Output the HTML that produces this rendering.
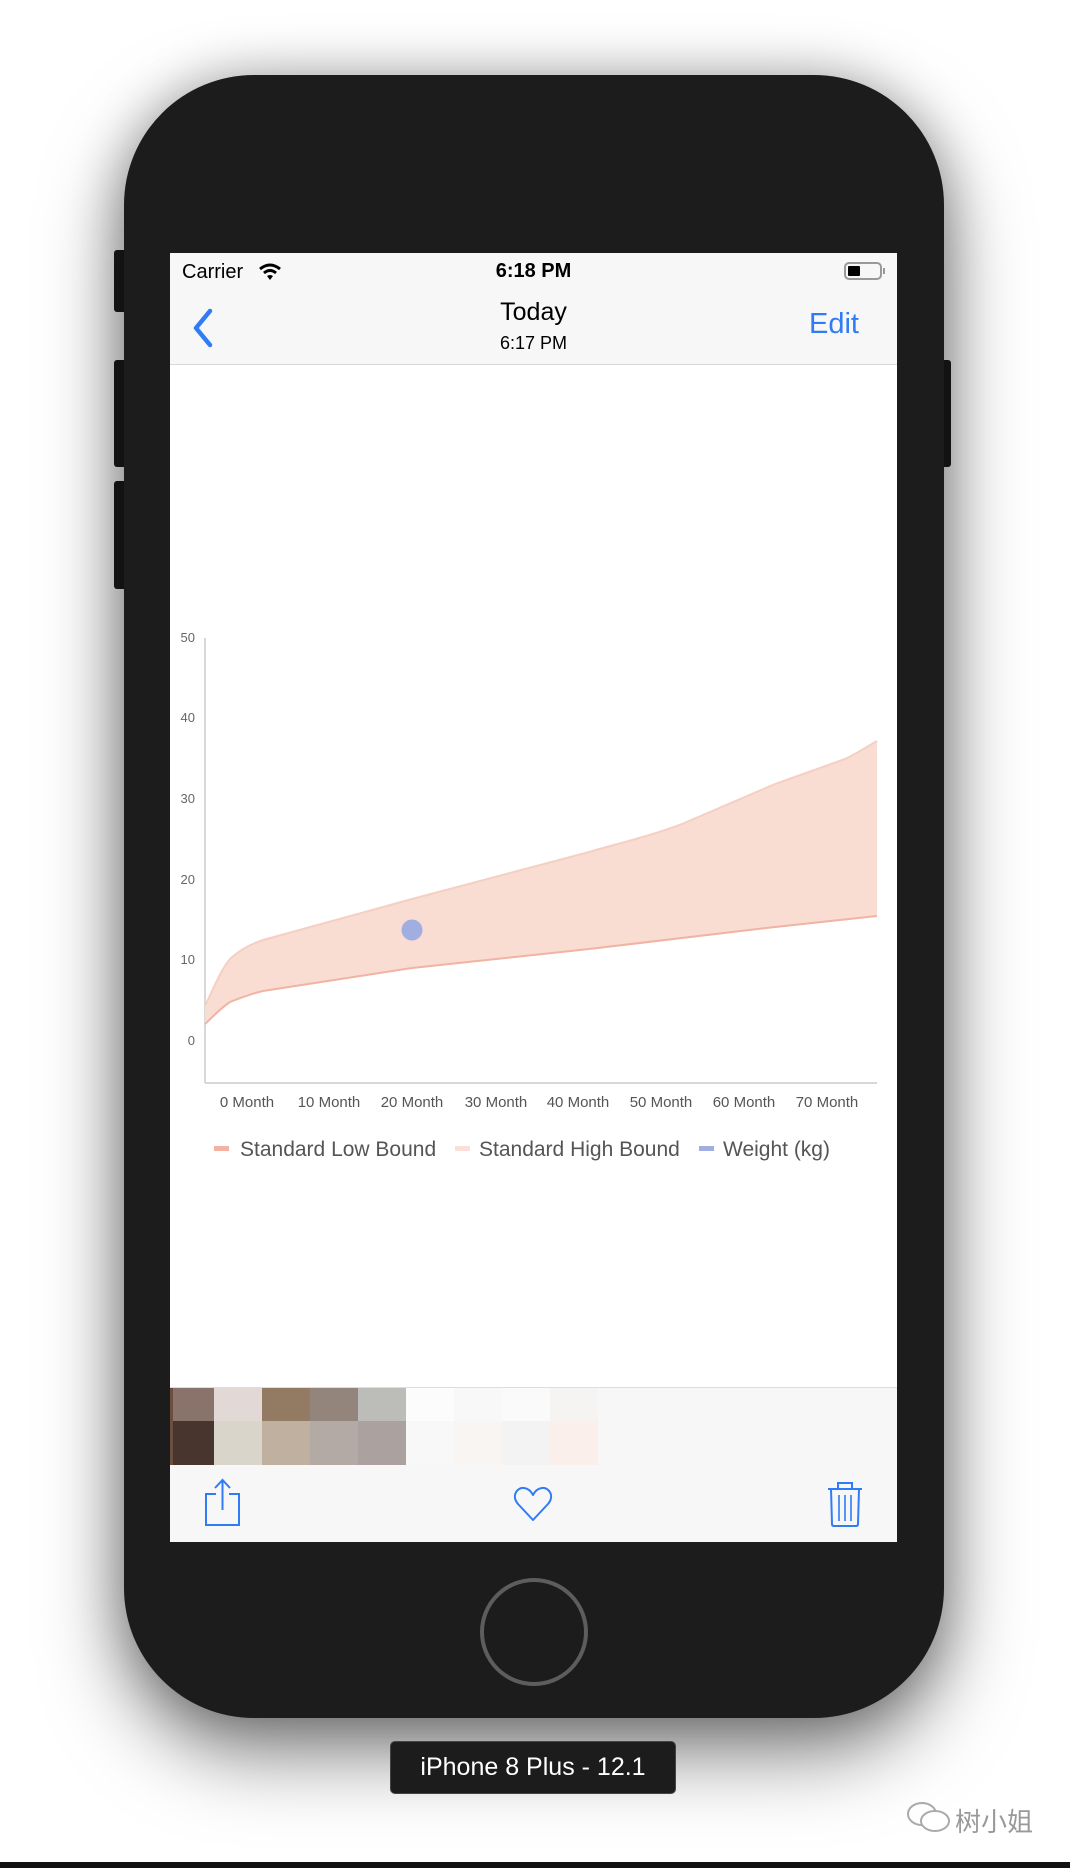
<!DOCTYPE html>
<html><head><meta charset="utf-8"><style>
*{margin:0;padding:0;box-sizing:border-box}
body{width:1070px;height:1868px;background:#fff;position:relative;overflow:hidden;font-family:"Liberation Sans",sans-serif}
.abs{position:absolute}
.phone{left:124px;top:75px;width:820px;height:1643px;background:#1c1c1c;border-radius:130px;box-shadow:0 35px 80px rgba(0,0,0,.5),0 0 50px rgba(0,0,0,.25)}
.btn{background:#1c1c1c;border-radius:3px}
.screen{left:170px;top:253px;width:727px;height:1289px;background:#fff;overflow:hidden}
.t{position:absolute;white-space:nowrap}
</style></head><body>
<div class="abs btn" style="left:114px;top:250px;width:14px;height:62px"></div>
<div class="abs btn" style="left:114px;top:360px;width:14px;height:107px"></div>
<div class="abs btn" style="left:114px;top:481px;width:14px;height:108px"></div>
<div class="abs btn" style="left:940px;top:360px;width:11px;height:107px"></div>
<div class="abs phone"></div>
<div class="abs" style="left:480px;top:1578px;width:108px;height:108px;border-radius:50%;border:4px solid #5d5d5d"></div>
<div class="abs screen">
  <div class="abs" style="left:0;top:0;width:727px;height:112px;background:#f7f7f7;border-bottom:1px solid #d8d8d8"></div>
  <div class="t" style="left:12px;top:8px;font-size:20px;color:#000">Carrier</div>
  <svg class="abs" style="left:88px;top:10px" width="24" height="18" viewBox="0 0 24 18"><path d="M2 6 Q12 -2 22 6" stroke="#000" stroke-width="3" fill="none"/><path d="M6 10 Q12 5 18 10" stroke="#000" stroke-width="3" fill="none"/><path d="M9 13 L12 17 L15 13 Q12 11 9 13Z" fill="#000"/></svg>
  <div class="t" style="left:0;width:727px;text-align:center;top:7px;font-size:20px;font-weight:bold;color:#000">6:18 PM</div>
  <div class="abs" style="left:674px;top:9px;width:38px;height:18px;border:2px solid #999;border-radius:5px"><div style="margin:2px;width:12px;height:10px;background:#000;border-radius:1px"></div></div>
  <div class="abs" style="left:713px;top:15px;width:2px;height:6px;background:#999"></div>
  <svg class="abs" style="left:22px;top:55px" width="22" height="40" viewBox="0 0 22 40"><path d="M18 3 L4 20 L18 37" stroke="#2f7cf6" stroke-width="4.5" fill="none" stroke-linecap="round" stroke-linejoin="round"/></svg>
  <div class="t" style="left:0;width:727px;text-align:center;top:45px;font-size:25px;color:#000">Today</div>
  <div class="t" style="left:0;width:727px;text-align:center;top:80px;font-size:18px;color:#000">6:17 PM</div>
  <div class="t" style="left:639px;top:55px;font-size:29px;color:#2f7cf6">Edit</div>

  <svg class="abs" style="left:0;top:0" width="727" height="1289" viewBox="170 253 727 1289">
    <line x1="205" y1="638" x2="205" y2="1083" stroke="#ccc" stroke-width="1.5"/>
    <line x1="205" y1="1083" x2="877" y2="1083" stroke="#ccc" stroke-width="1.5"/>
    <g font-family="Liberation Sans" font-size="13" fill="#666" text-anchor="end">
      <text x="195" y="642">50</text><text x="195" y="722">40</text><text x="195" y="803">30</text>
      <text x="195" y="884">20</text><text x="195" y="964">10</text><text x="195" y="1045">0</text>
    </g>
    <path d="M205 1006 C215 985 222 968 230 959 C242 948 252 944 263 940 L412 899 L589 852 C620 843 650 836 682 824 L775 784 L845 759 C858 753 868 746 877 741 L877 916 L775 927 L589 949 L412 968 L263 991 C250 994 240 998 230 1002 C218 1010 212 1018 205 1024Z" fill="#f9dcd2"/>
    <path d="M205 1006 C215 985 222 968 230 959 C242 948 252 944 263 940 L412 899 L589 852 C620 843 650 836 682 824 L775 784 L845 759 C858 753 868 746 877 741" stroke="#f5cfc2" stroke-width="2" fill="none"/>
    <path d="M877 916 L775 927 L589 949 L412 968 L263 991 C250 994 240 998 230 1002 C218 1010 212 1018 205 1024" stroke="#f1b3a2" stroke-width="2" fill="none"/>
    <circle cx="412" cy="930" r="10.5" fill="#a0aee2"/>
    <g font-family="Liberation Sans" font-size="15" fill="#555" text-anchor="middle">
      <text x="247" y="1107">0 Month</text><text x="329" y="1107">10 Month</text><text x="412" y="1107">20 Month</text>
      <text x="496" y="1107">30 Month</text><text x="578" y="1107">40 Month</text><text x="661" y="1107">50 Month</text>
      <text x="744" y="1107">60 Month</text><text x="827" y="1107">70 Month</text>
    </g>
    <rect x="214" y="1146" width="15" height="5" fill="#f1b3a2"/>
    <rect x="455" y="1146" width="15" height="5" fill="#fae0d8"/>
    <rect x="699" y="1146" width="15" height="5" fill="#a0aee2"/>
    <g font-family="Liberation Sans" font-size="21" fill="#555">
      <text x="240" y="1156">Standard Low Bound</text>
      <text x="479" y="1156">Standard High Bound</text>
      <text x="723" y="1156">Weight (kg)</text>
    </g>
  </svg>

  <div class="abs" style="left:0;top:1134px;width:727px;height:155px;background:#f7f7f7;border-top:1px solid #ddd"></div>
  <div class="abs" style="left:0;top:1135px;display:grid;grid-template-columns:3px 41px 48px 48px 48px 48px 48px 48px 48px 48px;grid-template-rows:33px 44px">
    <div style="background:#6a4f40"></div><div style="background:#8a736a"></div><div style="background:#e2d8d5"></div><div style="background:#927a63"></div><div style="background:#93857b"></div><div style="background:#bcbdb9"></div><div style="background:#fcfcfc"></div><div style="background:#f8f8f8"></div><div style="background:#fafafa"></div><div style="background:#f6f4f2"></div>
    <div style="background:#6a4f40"></div><div style="background:#47352e"></div><div style="background:#dad5ca"></div><div style="background:#c0b09f"></div><div style="background:#b4aaa5"></div><div style="background:#aba19f"></div><div style="background:#f8f8f8"></div><div style="background:#f9f5f3"></div><div style="background:#f3f3f3"></div><div style="background:#faefea"></div>
  </div>
  <svg class="abs" style="left:33px;top:1225px" width="40" height="50" viewBox="0 0 40 50"><path d="M13 16 H3 V47 H36 V16 H26" stroke="#2f7cf6" stroke-width="2" fill="none"/><path d="M19.5 32 V3 M12 10 L19.5 2 L27 10" stroke="#2f7cf6" stroke-width="2" fill="none"/></svg>
  <svg class="abs" style="left:343px;top:1233px" width="40" height="36" viewBox="0 0 40 36"><path d="M20 34 L5 18 C-2 10 4 1 11 2 C15 2.5 18 5 20 9 C22 5 25 2.5 29 2 C36 1 42 10 35 18 Z" stroke="#2f7cf6" stroke-width="2" fill="none" stroke-linejoin="round"/></svg>
  <svg class="abs" style="left:656px;top:1226px" width="38" height="50" viewBox="0 0 38 50"><path d="M2 10 H36 M12 10 V4 H26 V10" stroke="#2f7cf6" stroke-width="2" fill="none"/><path d="M5 10 L6 45 Q6 47 8 47 H30 Q32 47 32 45 L33 10" stroke="#2f7cf6" stroke-width="2" fill="none"/><path d="M13 16 V42 M19 16 V42 M25 16 V42" stroke="#2f7cf6" stroke-width="1.6"/></svg>
</div>
<div class="abs" style="left:390px;top:1741px;width:286px;height:53px;background:#1c1c1c;border-radius:5px;border:1px solid #444"></div>
<div class="t" style="left:390px;width:286px;text-align:center;top:1753px;font-size:25px;color:#fff">iPhone 8 Plus - 12.1</div>
<svg class="abs" style="left:905px;top:1800px" width="50" height="36" viewBox="0 0 50 36"><ellipse cx="17" cy="14" rx="14" ry="11" fill="none" stroke="#aaa" stroke-width="2"/><ellipse cx="30" cy="21" rx="14" ry="10" fill="#fff" stroke="#aaa" stroke-width="2"/></svg>
<div class="t" style="left:955px;top:1802px;font-size:26px;color:#999;font-family:'Liberation Sans','Noto Sans CJK SC',sans-serif">树小姐</div>
<div class="abs" style="left:0;top:1862px;width:1070px;height:6px;background:#111"></div>
</body></html>
